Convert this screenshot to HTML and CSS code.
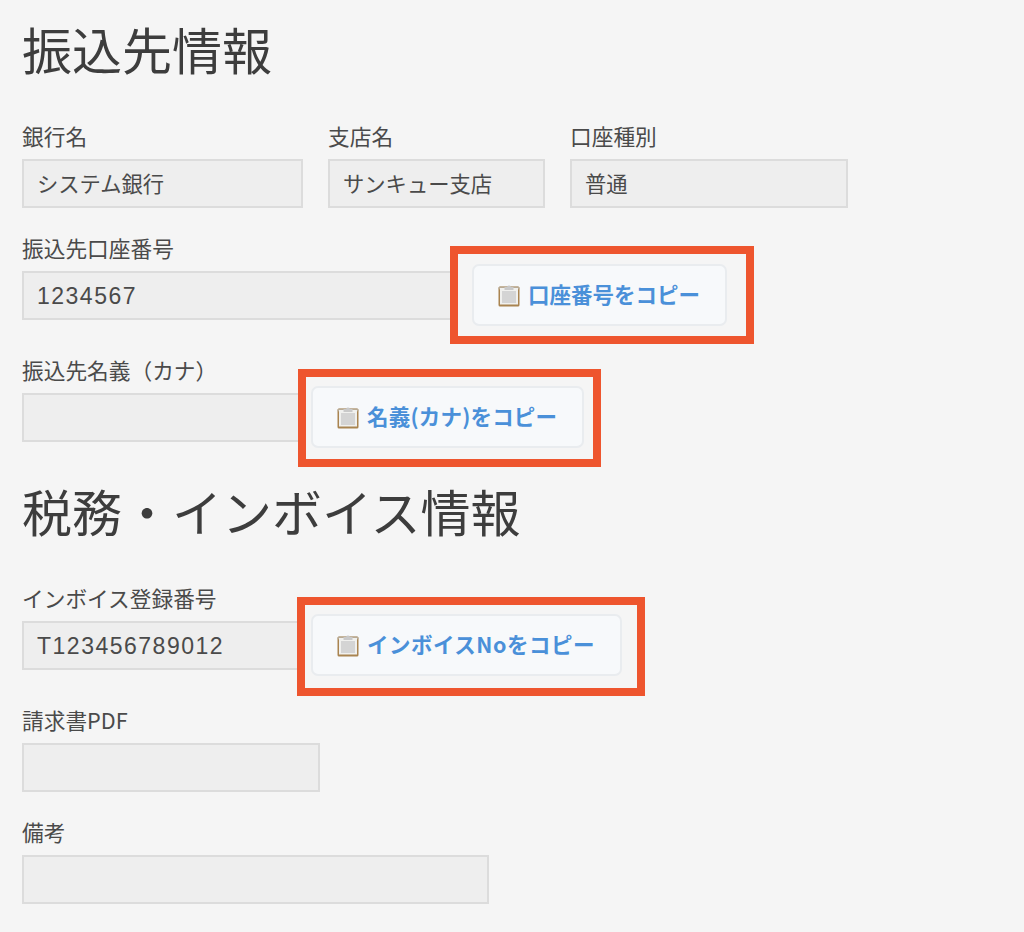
FILE: index.html
```html
<!DOCTYPE html>
<html lang="ja">
<head>
    <meta charset="UTF-8">
    <meta name="viewport" content="width=device-width, initial-scale=1.0">
    <title>振込先情報</title>
    <link rel="stylesheet" href="styles.css">
</head>
<body>
    <svg class="icon-defs" width="0" height="0" aria-hidden="true">
        <symbol id="clipboard" viewBox="0 0 22 23">
            <rect x="0.5" y="2.5" width="21" height="20" rx="1.5" fill="#a98450"/>
            <rect x="0.5" y="2.5" width="21" height="3" rx="1.5" fill="#b9ab95"/>
            <rect x="2" y="4" width="18" height="16.5" fill="#f0f0ee"/>
            <rect x="4" y="7" width="14" height="12" fill="#d4d4d4"/>
            <path d="M6.5 6V3h2.6a2 2 0 0 1 3.8 0h2.6v3z" fill="#c9c9c9"/>
        </symbol>
    </svg>

    <h1>振込先情報</h1>

    <div class="field-row">
        <div class="field">
            <label>銀行名</label>
            <input class="input input-bank" type="text" value="システム銀行" readonly>
        </div>
        <div class="field">
            <label>支店名</label>
            <input class="input input-branch" type="text" value="サンキュー支店" readonly>
        </div>
        <div class="field">
            <label>口座種別</label>
            <input class="input input-type" type="text" value="普通" readonly>
        </div>
    </div>

    <div class="field copy-field">
        <label>振込先口座番号</label>
        <div class="copy-row">
            <input class="input input-account num" type="text" value="1234567" readonly>
            <button class="copy-btn copy-account" type="button">
                <svg class="copy-icon"><use href="#clipboard"/></svg>
                <span class="copy-label">口座番号をコピー</span>
                <span class="highlight"></span>
            </button>
        </div>
    </div>

    <div class="field copy-field">
        <label>振込先名義（カナ）</label>
        <div class="copy-row">
            <input class="input input-short" type="text" readonly>
            <button class="copy-btn copy-name" type="button">
                <svg class="copy-icon"><use href="#clipboard"/></svg>
                <span class="copy-label">名義(カナ)をコピー</span>
                <span class="highlight"></span>
            </button>
        </div>
    </div>

    <h1 class="section-title">税務・インボイス情報</h1>

    <div class="field copy-field">
        <label>インボイス登録番号</label>
        <div class="copy-row">
            <input class="input input-short num" type="text" value="T123456789012" readonly>
            <button class="copy-btn copy-invoice" type="button">
                <svg class="copy-icon"><use href="#clipboard"/></svg>
                <span class="copy-label">インボイスNoをコピー</span>
                <span class="highlight"></span>
            </button>
        </div>
    </div>

    <div class="field">
        <label>請求書PDF</label>
        <input class="input input-pdf" type="text" readonly>
    </div>

    <div class="field">
        <label>備考</label>
        <input class="input input-note" type="text" readonly>
    </div>
</body>
</html>
```

FILE: styles.css
```css
body {
    font-family: "Noto Sans CJK JP", "Liberation Sans", sans-serif;
    margin: 0;
    padding: 18px 0 0 22px;
    background-color: #f5f5f5;
    color: #444;
    font-size: 21.7px;
    overflow: hidden;
}
.icon-defs {
    position: absolute;
}
h1 {
    font-size: 50px;
    font-weight: 400;
    line-height: 60px;
    color: #3d3d3d;
    margin: 0 0 46px;
}
.section-title {
    margin-top: 7px;
    margin-bottom: 46px;
}
.field-row {
    display: flex;
    gap: 25px;
}
.field {
    margin-bottom: 28px;
}
label {
    display: block;
    line-height: 24px;
    margin-bottom: 11px;
    color: #4a4a4a;
}
.input {
    display: block;
    height: 49px;
    padding: 0 13px 3px;
    border: 2px solid #dcdcdc;
    background-color: #eeeeee;
    box-sizing: border-box;
    font-family: inherit;
    font-size: 21.3px;
    color: #4a4a4a;
    outline: none;
}
.num {
    padding: 2px 13px 0;
    font-family: "Liberation Sans", sans-serif;
    font-size: 23px;
    letter-spacing: 1.5px;
}
.input-bank { width: 281px; }
.input-branch { width: 217px; }
.input-type { width: 278px; }
.input-account { width: 432px; margin-right: 18px; }
.input-short { width: 281px; margin-right: 8px; }
.input-pdf { width: 298px; }
.input-note { width: 467px; }
.copy-field {
    margin-bottom: 32px;
}
.copy-field label {
    margin-bottom: 4px;
}
.copy-row {
    display: flex;
    align-items: center;
}
.copy-btn {
    position: relative;
    display: flex;
    align-items: center;
    gap: 8px;
    height: 62px;
    padding: 0 25px 0 24px;
    border: 2px solid #e9ecef;
    border-radius: 7px;
    background-color: #f7f9fb;
    color: #4a90d9;
    font-family: inherit;
    font-size: 21.5px;
    font-weight: 700;
    cursor: pointer;
}
.copy-label {
    margin-top: -3px;
}
.copy-name .copy-label {
    letter-spacing: 0.2px;
}
.copy-invoice .copy-label {
    letter-spacing: 0.5px;
}
.copy-icon {
    width: 22px;
    height: 23px;
}
.highlight {
    position: absolute;
    border: 8px solid #ee552e;
    pointer-events: none;
}
.copy-account .highlight {
    top: -20px;
    right: -29px;
    bottom: -20px;
    left: -24px;
}
.copy-name .highlight {
    top: -19px;
    right: -19px;
    bottom: -21px;
    left: -15px;
}
.copy-invoice .highlight {
    top: -19px;
    right: -25px;
    bottom: -22px;
    left: -16px;
}
```
